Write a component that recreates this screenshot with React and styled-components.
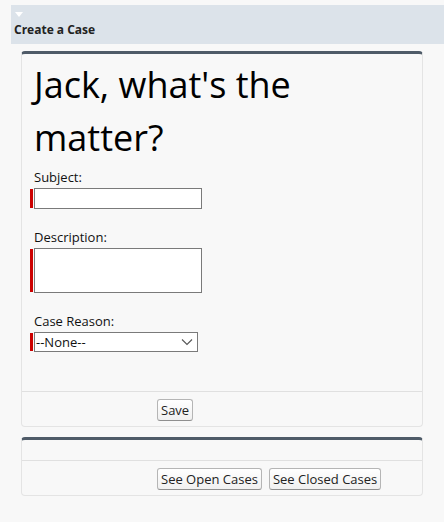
import React from 'react'
import styled, {createGlobalStyle} from 'styled-components'

const Global = createGlobalStyle`
  html, body {
    margin: 0;
    background: #f8f8f8;
    font-family: "Open Sans", "Liberation Sans", sans-serif;
    color: #000;
  }
`

const Page = styled.div`
  padding-top: 5px;
  padding-left: 11px;
`

const SectionHeader = styled.div`
  background: #dce3ea;
  height: 39px;
  box-sizing: border-box;
  padding: 7px 0 0 3px;
`

const Twisty = styled.div`
  width: 0;
  height: 0;
  margin-left: 1px;
  border-left: 4px solid transparent;
  border-right: 4px solid transparent;
  border-top: 5px solid #fff;
`

const SectionTitle = styled.div`
  font-size: 12px;
  font-weight: bold;
  color: #222;
  margin-top: 5px;
  line-height: 16px;
`

const Block = styled.div`
  margin: ${(p) => p.$top}px 21px 0 10px;
  border: 1px solid #e4e4e4;
  border-top: 3px solid #4f5b68;
  border-radius: 4px;
  background: #f8f8f8;
`

const BlockBody = styled.div`
  padding: 4px 12px 0 12px;
  min-height: ${(p) => p.$min}px;
  box-sizing: border-box;
`

const Heading = styled.h1`
  margin: 0;
  font-size: 36px;
  font-weight: normal;
  line-height: 53px;
  color: #000;
`

const Field = styled.div`
  margin-top: ${(p) => p.$gap}px;
`

const Label = styled.div`
  font-size: 13px;
  line-height: 18px;
  color: #111;
`

const Required = styled.div`
  position: relative;
  margin-top: 2px;
  &::before {
    content: '';
    position: absolute;
    left: -4px;
    top: 1px;
    bottom: 1px;
    width: 3px;
    background: #c00;
  }
`

const TextInput = styled.input`
  display: block;
  box-sizing: border-box;
  width: 168px;
  height: 21px;
  margin: 0;
  border: 1px solid #7a7a7a;
  background: #fff;
  font-size: 13px;
`

const TextArea = styled.textarea`
  display: block;
  box-sizing: border-box;
  width: 168px;
  height: 45px;
  margin: 0;
  border: 1px solid #7a7a7a;
  background: #fff;
  resize: none;
`

const SelectBox = styled.div`
  display: flex;
  align-items: center;
  justify-content: space-between;
  box-sizing: border-box;
  width: 164px;
  height: 20px;
  border: 1px solid #7a7a7a;
  background: #fff;
  padding: 0 4px 0 1px;
  font-size: 13px;
  color: #111;
`

const Footer = styled.div`
  border-top: 1px solid #e0e0e0;
  display: flex;
  gap: 7px;
  padding: 7px 0 5px 135px;
`

const Button = styled.button`
  font-family: "Open Sans", "Liberation Sans", sans-serif;
  font-size: 13px;
  color: #222;
  background: linear-gradient(#fff, #f0f0f0);
  border: 1px solid #b5b5b5;
  border-bottom-color: #8f8f8f;
  border-radius: 3px;
  padding: 0 3px;
  height: 22px;
  line-height: 18px;
`

const Chevron = () => (
  <svg width="12" height="8" viewBox="0 0 12 8">
    <path d="M1 1.5 L6 6.5 L11 1.5" fill="none" stroke="#555" strokeWidth="1.1" />
  </svg>
)

export default function App() {
  return (
    <Page>
      <Global />
      <SectionHeader>
        <Twisty />
        <SectionTitle>Create a Case</SectionTitle>
      </SectionHeader>
      <Block $top={7}>
        <BlockBody $min={337}>
          <Heading>Jack, what's the matter?</Heading>
          <Field $gap={4}>
            <Label>Subject:</Label>
            <Required>
              <TextInput />
            </Required>
          </Field>
          <Field $gap={19}>
            <Label>Description:</Label>
            <Required>
              <TextArea />
            </Required>
          </Field>
          <Field $gap={19}>
            <Label>Case Reason:</Label>
            <Required>
              <SelectBox>
                <span>--None--</span>
                <Chevron />
              </SelectBox>
            </Required>
          </Field>
        </BlockBody>
        <Footer>
          <Button>Save</Button>
        </Footer>
      </Block>
      <Block $top={10}>
        <BlockBody $min={20} />
        <Footer>
          <Button>See Open Cases</Button>
          <Button>See Closed Cases</Button>
        </Footer>
      </Block>
    </Page>
  )
}
